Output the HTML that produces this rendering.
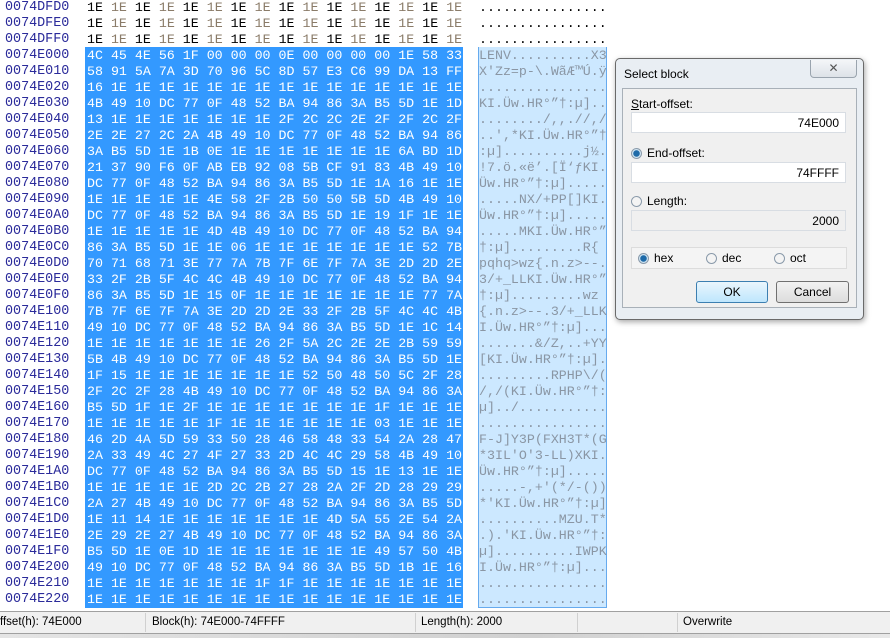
<!DOCTYPE html>
<html><head><meta charset="utf-8"><style>
body{margin:0;width:890px;height:638px;overflow:hidden;background:#fff;position:relative;font-family:"Liberation Mono",monospace}
.a{position:absolute;left:5px;color:#2a2a9a;font-size:13.4px;line-height:16px;white-space:pre}
.h{position:absolute;left:87px;font-size:13.3px;line-height:16px;white-space:pre;color:#000}
.h i{font-style:normal;color:#8a7b68}
.sel{position:absolute;left:85px;top:47px;width:378px;height:561px;background:#3399ff}
.hs{color:#fff}
.tc{position:absolute;left:478px;top:47px;width:127px;height:560px;background:#cce8ff;border:1px solid #66aaee;border-top:none}
.t{position:absolute;left:479px;font-size:13.3px;line-height:16px;white-space:pre;color:#000}
.ts{color:#8a96a4}
.sb{position:absolute;left:0;top:611px;width:890px;height:21px;background:#f0f0f0;border-top:1px solid #a0a0a0;border-bottom:1px solid #a0a0a0;font-family:"Liberation Sans",sans-serif;font-size:11.5px}
.sb span{position:absolute;top:4px}
.sb b{position:absolute;top:1px;width:1px;height:19px;background:#d0d0d0}
.bot{position:absolute;left:0;top:634px;width:890px;height:4px;background:linear-gradient(90deg,#e4e4e4,#d0d0d0 60%,#e8e8e8)}
.dlg{position:absolute;left:615px;top:58px;width:247px;height:260px;background:#e9eef3;border:1px solid #6a6a6a;border-radius:5px;box-shadow:1px 2px 6px rgba(0,0,0,.35);font-family:"Liberation Sans",sans-serif;font-size:12px}
.dl{position:absolute}
.in{position:absolute;left:15px;width:215px;height:21px;background:#fff;border:1px solid #d8dde3;text-align:right;box-sizing:border-box;padding:3px 6px 0 0;font-size:12px}
.rd{display:inline-block;width:11px;height:11px;border-radius:50%;border:1px solid #8a9aaa;background:#f4f4f4;vertical-align:-2px;margin-right:5px;box-sizing:border-box}
.rd.on{background:radial-gradient(circle,#1e6aa8 0 3px,#cfe4f2 3.5px)}
.btn{position:absolute;top:222px;height:20px;border:1px solid #707070;border-radius:3px;text-align:center;line-height:20px;background:linear-gradient(#f2f2f2,#dcdcdc)}
</style></head><body>
<div class="a" style="top:0">0074DFD0
0074DFE0
0074DFF0
0074E000
0074E010
0074E020
0074E030
0074E040
0074E050
0074E060
0074E070
0074E080
0074E090
0074E0A0
0074E0B0
0074E0C0
0074E0D0
0074E0E0
0074E0F0
0074E100
0074E110
0074E120
0074E130
0074E140
0074E150
0074E160
0074E170
0074E180
0074E190
0074E1A0
0074E1B0
0074E1C0
0074E1D0
0074E1E0
0074E1F0
0074E200
0074E210
0074E220</div>
<div class="h" style="top:0">1E <i>1E</i> 1E <i>1E</i> 1E <i>1E</i> 1E <i>1E</i> 1E <i>1E</i> 1E <i>1E</i> 1E <i>1E</i> 1E <i>1E</i>
1E <i>1E</i> 1E <i>1E</i> 1E <i>1E</i> 1E <i>1E</i> 1E <i>1E</i> 1E <i>1E</i> 1E <i>1E</i> 1E <i>1E</i>
1E <i>1E</i> 1E <i>1E</i> 1E <i>1E</i> 1E <i>1E</i> 1E <i>1E</i> 1E <i>1E</i> 1E <i>1E</i> 1E <i>1E</i></div>
<div class="sel"></div>
<div class="h hs" style="top:48px">4C 45 4E 56 1F 00 00 00 0E 00 00 00 00 1E 58 33
58 91 5A 7A 3D 70 96 5C 8D 57 E3 C6 99 DA 13 FF
16 1E 1E 1E 1E 1E 1E 1E 1E 1E 1E 1E 1E 1E 1E 1E
4B 49 10 DC 77 0F 48 52 BA 94 86 3A B5 5D 1E 1D
13 1E 1E 1E 1E 1E 1E 1E 2F 2C 2C 2E 2F 2F 2C 2F
2E 2E 27 2C 2A 4B 49 10 DC 77 0F 48 52 BA 94 86
3A B5 5D 1E 1B 0E 1E 1E 1E 1E 1E 1E 1E 6A BD 1D
21 37 90 F6 0F AB EB 92 08 5B CF 91 83 4B 49 10
DC 77 0F 48 52 BA 94 86 3A B5 5D 1E 1A 16 1E 1E
1E 1E 1E 1E 1E 4E 58 2F 2B 50 50 5B 5D 4B 49 10
DC 77 0F 48 52 BA 94 86 3A B5 5D 1E 19 1F 1E 1E
1E 1E 1E 1E 1E 4D 4B 49 10 DC 77 0F 48 52 BA 94
86 3A B5 5D 1E 1E 06 1E 1E 1E 1E 1E 1E 1E 52 7B
70 71 68 71 3E 77 7A 7B 7F 6E 7F 7A 3E 2D 2D 2E
33 2F 2B 5F 4C 4C 4B 49 10 DC 77 0F 48 52 BA 94
86 3A B5 5D 1E 15 0F 1E 1E 1E 1E 1E 1E 1E 77 7A
7B 7F 6E 7F 7A 3E 2D 2D 2E 33 2F 2B 5F 4C 4C 4B
49 10 DC 77 0F 48 52 BA 94 86 3A B5 5D 1E 1C 14
1E 1E 1E 1E 1E 1E 1E 26 2F 5A 2C 2E 2E 2B 59 59
5B 4B 49 10 DC 77 0F 48 52 BA 94 86 3A B5 5D 1E
1F 15 1E 1E 1E 1E 1E 1E 1E 52 50 48 50 5C 2F 28
2F 2C 2F 28 4B 49 10 DC 77 0F 48 52 BA 94 86 3A
B5 5D 1F 1E 2F 1E 1E 1E 1E 1E 1E 1E 1F 1E 1E 1E
1E 1E 1E 1E 1E 1F 1E 1E 1E 1E 1E 1E 03 1E 1E 1E
46 2D 4A 5D 59 33 50 28 46 58 48 33 54 2A 28 47
2A 33 49 4C 27 4F 27 33 2D 4C 4C 29 58 4B 49 10
DC 77 0F 48 52 BA 94 86 3A B5 5D 15 1E 13 1E 1E
1E 1E 1E 1E 1E 2D 2C 2B 27 28 2A 2F 2D 28 29 29
2A 27 4B 49 10 DC 77 0F 48 52 BA 94 86 3A B5 5D
1E 11 14 1E 1E 1E 1E 1E 1E 1E 4D 5A 55 2E 54 2A
2E 29 2E 27 4B 49 10 DC 77 0F 48 52 BA 94 86 3A
B5 5D 1E 0E 1D 1E 1E 1E 1E 1E 1E 1E 49 57 50 4B
49 10 DC 77 0F 48 52 BA 94 86 3A B5 5D 1B 1E 16
1E 1E 1E 1E 1E 1E 1E 1F 1F 1E 1E 1E 1E 1E 1E 1E
1E 1E 1E 1E 1E 1E 1E 1E 1E 1E 1E 1E 1E 1E 1E 1E</div>
<div class="t" style="top:0">................
................
................</div>
<div class="tc"></div>
<div class="t ts" style="top:48px">LENV..........X3
X'Zz=p-\.WãÆ™Ú.ÿ
................
KI.Üw.HR°”†:µ]..
......../,,.//,/
..',*KI.Üw.HR°”†
:µ]..........j½.
!7.ö.«ë’.[Ï‘ƒKI.
Üw.HR°”†:µ].....
.....NX/+PP[]KI.
Üw.HR°”†:µ].....
.....MKI.Üw.HR°”
†:µ].........R{
pqhq>wz{.n.z>--.
3/+_LLKI.Üw.HR°”
†:µ].........wz
{.n.z>--.3/+_LLK
I.Üw.HR°”†:µ]...
.......&amp;/Z,..+YY
[KI.Üw.HR°”†:µ].
.........RPHP\/(
/,/(KI.Üw.HR°”†:
µ]../...........
................
F-J]Y3P(FXH3T*(G
*3IL'O'3-LL)XKI.
Üw.HR°”†:µ].....
.....-,+'(*/-())
*'KI.Üw.HR°”†:µ]
..........MZU.T*
.).'KI.Üw.HR°”†:
µ]..........IWPK
I.Üw.HR°”†:µ]...
................
................</div>
<div class="sb">
<span style="left:0">ffset(h): 74E000</span><b style="left:145px"></b>
<span style="left:152px">Block(h): 74E000-74FFFF</span><b style="left:415px"></b>
<span style="left:421px">Length(h): 2000</span><b style="left:577px"></b>
<b style="left:677px"></b><span style="left:683px">Overwrite</span>
</div>
<div class="bot"></div>
<div class="dlg">
<div class="dl" style="left:194px;top:1px;width:45px;height:17px;border:1px solid #9aa4ae;border-top:none;border-radius:0 0 4px 4px;background:linear-gradient(#f4f6f8,#dde2e8);text-align:center;font-size:12px;line-height:16px;color:#555">✕</div>
<div class="dl" style="left:8px;top:8px">Select block</div>
<div class="dl" style="left:6px;top:29px;width:233px;height:218px;background:#f0f0f0;border:1px solid #a8b0b8"></div>
<div class="dl" style="left:15px;top:38px"><u>S</u>tart-offset:</div>
<div class="in" style="top:53px">74E000</div>
<div class="dl" style="left:15px;top:87px"><span class="rd on"></span>End-offset:</div>
<div class="in" style="top:103px">74FFFF</div>
<div class="dl" style="left:15px;top:135px"><span class="rd"></span>Length:</div>
<div class="in" style="top:151px;background:#f0f0f0">2000</div>
<div class="dl" style="left:15px;top:188px;width:214px;height:20px;border:1px solid #dcdcdc;background:#f4f4f4"></div>
<div class="dl" style="left:22px;top:192px"><span class="rd on"></span>hex</div>
<div class="dl" style="left:90px;top:192px"><span class="rd"></span>dec</div>
<div class="dl" style="left:158px;top:192px"><span class="rd"></span>oct</div>
<div class="btn" style="left:80px;width:70px;border-color:#3c7fb1;background:linear-gradient(#eaf6fd,#bee6fd)">OK</div>
<div class="btn" style="left:160px;width:71px">Cancel</div>
</div>
</body></html>
